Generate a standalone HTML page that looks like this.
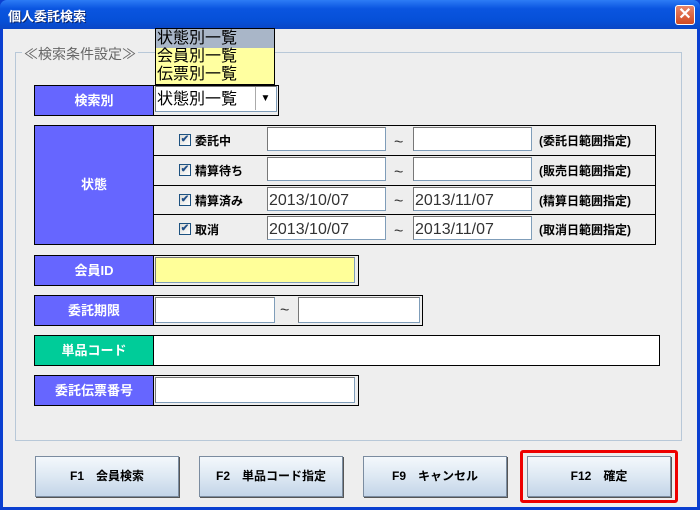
<!DOCTYPE html><html><head><meta charset="utf-8"><style>
*{margin:0;padding:0;box-sizing:border-box}
body{width:700px;height:510px;position:relative;background:#0a3fd0;font-family:"Liberation Sans","Noto Sans CJK JP",sans-serif;overflow:hidden}
.a{position:absolute}
.tb{left:0;top:0;width:700px;height:29px;background:linear-gradient(#2d7cf5,#0a55e0 30%,#0650d8 70%,#0a47c6);border-radius:7px 7px 0 0}
.tt{left:8px;top:6px;color:#fff;font-weight:bold;font-size:13px;text-shadow:1px 1px #0a246a}
.cl{left:675px;top:5px;width:20px;height:20px;background:linear-gradient(#e8866a,#d24a22);border:1px solid #fff;border-radius:3px;color:#fff;font-size:16px;line-height:17px;text-align:center;font-weight:bold}
.cl::before{content:"✕"}
.body{left:3px;top:29px;width:694px;height:478px;background:#eeeeee}
.gb{left:15px;top:52px;width:667px;height:389px;border:1px solid #b8c8d8}
.lg{left:22px;top:44px;background:#eeeeee;color:#666;font-size:14px;padding:0 2px}
.lb{background:#6666ff;color:#fff;font-weight:bold;font-size:13px;text-align:center;border:1px solid #000}
.bx{border:1px solid #000;background:#eeeeee}
.in{background:#fff;border:1px solid #7f9db9;border-top-color:#777;border-left-color:#777;font-size:16px;color:#333;padding-left:1px;line-height:25px}
.cb{width:12px;height:12px;border:1px solid #1c5180;background:linear-gradient(135deg,#dcdcd7,#fff);font-size:10px;line-height:10px;text-align:center;color:#214f87;font-weight:bold}
.ct{font-size:12px;font-weight:bold;color:#000}
.tl{font-size:16px;color:#333}
.nt{font-size:12px;font-weight:bold}
.bt{top:456px;width:144px;height:41px;border:1px solid #7b8ca0;background:linear-gradient(#f4f8fc,#dde8f3 50%,#c3d5e8);font-size:12px;font-weight:bold;text-align:center;line-height:39px;box-shadow:1px 1px 0 #555}
</style></head><body>
<div class="a tb"></div><div class="a tt">個人委託検索</div><div class="a cl"></div>
<div class="a body"></div>
<div class="a gb"></div><div class="a lg">≪検索条件設定≫</div>

<div class="a lb" style="left:34px;top:85px;width:120px;height:31px;line-height:29px">検索別</div>
<div class="a bx" style="left:153px;top:85px;width:126px;height:31px"></div>
<div class="a in" style="left:155px;top:86px;width:122px;height:26px;font-size:16px;color:#000">状態別一覧</div>
<div class="a" style="left:255px;top:87px;width:20px;height:23px;background:#fff;border-left:1px solid #aaa;font-size:10px;text-align:center;line-height:23px">▼</div>

<div class="a" style="left:155px;top:28px;width:120px;height:57px;border:1px solid #000;background:#ffffa0;font-size:16px;line-height:18px;color:#000">
<div style="background:#a9b6c8;padding-left:1px;padding-top:1px">状態別一覧</div><div style="padding-left:1px">会員別一覧</div><div style="padding-left:1px">伝票別一覧</div></div>

<div class="a lb" style="left:34px;top:125px;width:120px;height:120px;line-height:118px">状態</div>
<div class="a bx" style="left:153px;top:125px;width:503px;height:31px"></div>
<div class="a bx" style="left:153px;top:155px;width:503px;height:31px"></div>
<div class="a bx" style="left:153px;top:185px;width:503px;height:30px"></div>
<div class="a bx" style="left:153px;top:214px;width:503px;height:31px"></div>

<div class="a cb" style="left:179px;top:134px">✔</div><div class="a ct" style="left:195px;top:132px">委託中</div>
<div class="a cb" style="left:179px;top:164px">✔</div><div class="a ct" style="left:195px;top:162px">精算待ち</div>
<div class="a cb" style="left:179px;top:194px">✔</div><div class="a ct" style="left:195px;top:192px">精算済み</div>
<div class="a cb" style="left:179px;top:223px">✔</div><div class="a ct" style="left:195px;top:221px">取消</div>

<div class="a in" style="left:267px;top:127px;width:119px;height:24px"></div>
<div class="a in" style="left:413px;top:127px;width:119px;height:24px"></div>
<div class="a in" style="left:267px;top:157px;width:119px;height:24px"></div>
<div class="a in" style="left:413px;top:157px;width:119px;height:24px"></div>
<div class="a in" style="left:267px;top:187px;width:119px;height:24px">2013/10/07</div>
<div class="a in" style="left:413px;top:187px;width:119px;height:24px">2013/11/07</div>
<div class="a in" style="left:267px;top:216px;width:119px;height:24px">2013/10/07</div>
<div class="a in" style="left:413px;top:216px;width:119px;height:24px">2013/11/07</div>
<div class="a tl" style="left:394px;top:134px">~</div>
<div class="a tl" style="left:394px;top:164px">~</div>
<div class="a tl" style="left:394px;top:193px">~</div>
<div class="a tl" style="left:394px;top:223px">~</div>
<div class="a nt" style="left:539px;top:132px">(委託日範囲指定)</div>
<div class="a nt" style="left:539px;top:162px">(販売日範囲指定)</div>
<div class="a nt" style="left:539px;top:192px">(精算日範囲指定)</div>
<div class="a nt" style="left:539px;top:221px">(取消日範囲指定)</div>

<div class="a lb" style="left:34px;top:255px;width:120px;height:31px;line-height:29px">会員ID</div>
<div class="a bx" style="left:153px;top:255px;width:206px;height:31px"></div>
<div class="a in" style="left:155px;top:257px;width:200px;height:26px;background:#ffff99"></div>

<div class="a lb" style="left:34px;top:295px;width:120px;height:31px;line-height:29px">委託期限</div>
<div class="a bx" style="left:153px;top:295px;width:270px;height:31px"></div>
<div class="a in" style="left:155px;top:297px;width:120px;height:26px"></div>
<div class="a tl" style="left:280px;top:302px">~</div>
<div class="a in" style="left:298px;top:297px;width:122px;height:26px"></div>

<div class="a lb" style="left:34px;top:335px;width:120px;height:31px;line-height:29px;background:#00cc99">単品コード</div>
<div class="a bx" style="left:153px;top:335px;width:507px;height:31px;background:#fff"></div>

<div class="a lb" style="left:34px;top:375px;width:120px;height:31px;line-height:29px">委託伝票番号</div>
<div class="a bx" style="left:153px;top:375px;width:206px;height:31px"></div>
<div class="a in" style="left:155px;top:377px;width:200px;height:26px"></div>

<div class="a bt" style="left:35px">F1　会員検索</div>
<div class="a bt" style="left:199px">F2　単品コード指定</div>
<div class="a bt" style="left:363px">F9　キャンセル</div>
<div class="a" style="left:520px;top:450px;width:158px;height:53px;border:3px solid #ee0000;border-radius:3px"></div>
<div class="a bt" style="left:527px">F12　確定</div>
</body></html>
